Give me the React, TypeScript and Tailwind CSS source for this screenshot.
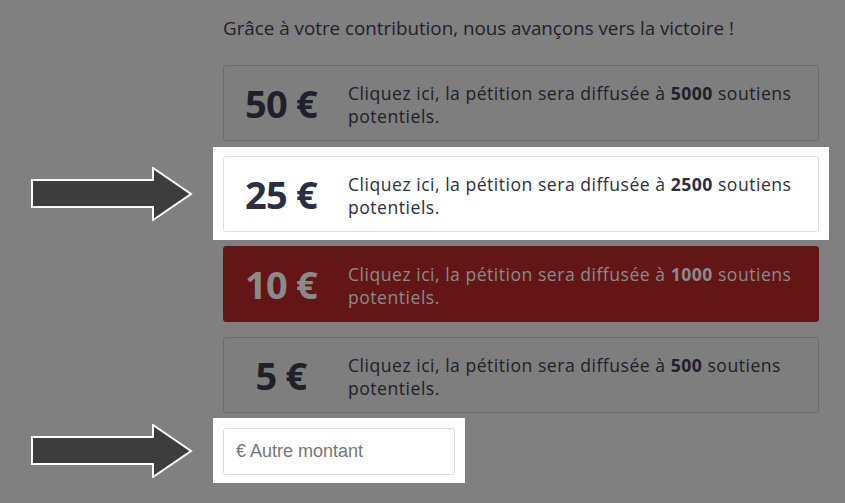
import React from "react";

type Tier = { amount: number; reach: number; tone: "dim" | "lit" | "red" };

const tiers: Tier[] = [
  { amount: 50, reach: 5000, tone: "dim" },
  { amount: 25, reach: 2500, tone: "lit" },
  { amount: 10, reach: 1000, tone: "red" },
  { amount: 5, reach: 500, tone: "dim" },
];

const Arrow = () => (
  <svg width="162" height="54" viewBox="0 0 162 54" className="block">
    <polygon
      points="1,13 122,13 122,1 160,27 122,53 122,40 1,40"
      fill="#3d3d3d"
      stroke="#ffffff"
      strokeWidth="2"
      strokeLinejoin="miter"
    />
  </svg>
);

const toneCard = {
  dim: "bg-[#7e7e7e] border-[#6c6c6c] text-[#1f2029]",
  lit: "bg-white border-[#dedede] text-[#2b2f3f]",
  red: "bg-[#641616] border-[#641616] text-[#8a8a8a]",
};

function TierCard({ tier }: { tier: Tier }) {
  return (
    <div
      className={`flex h-[76px] w-[596px] items-center rounded-[3px] border ${toneCard[tier.tone]}`}
    >
      <div className="w-[114px] shrink-0 text-center text-[38px] font-bold leading-none tracking-[-0.8px]">
        {tier.amount} €
      </div>
      <p className="ml-[10px] w-[455px] pt-[4px] text-[17.6px] leading-[23px] tracking-[0.5px]">
        Cliquez ici, la pétition sera diffusée à <b>{tier.reach}</b> soutiens potentiels.
      </p>
    </div>
  );
}

export default function App() {
  return (
    <div className="h-[503px] w-[845px] overflow-hidden bg-[#808080] font-['Open_Sans',sans-serif]">
      <div className="pl-[223px] pt-[16px] text-[18.8px] leading-[24px] text-[#1f2029]">
        Grâce à votre contribution, nous avançons vers la victoire !
      </div>

      {/* 50 € */}
      <div className="mt-[25px] flex">
        <div className="w-[223px] shrink-0" />
        <TierCard tier={tiers[0]} />
      </div>

      {/* 25 € highlighted */}
      <div className="mt-[6px] flex items-center">
        <div className="flex w-[213px] shrink-0 pl-[31px]">
          <Arrow />
        </div>
        <div className="bg-white px-[10px] pt-[9px] pb-[8px]">
          <TierCard tier={tiers[1]} />
        </div>
      </div>

      {/* 10 € */}
      <div className="mt-[6px] flex">
        <div className="w-[223px] shrink-0" />
        <TierCard tier={tiers[2]} />
      </div>

      {/* 5 € */}
      <div className="mt-[15px] flex">
        <div className="w-[223px] shrink-0" />
        <TierCard tier={tiers[3]} />
      </div>

      {/* autre montant */}
      <div className="mt-[5px] flex items-center">
        <div className="flex w-[213px] shrink-0 pl-[31px]">
          <Arrow />
        </div>
        <div className="bg-white px-[10px] pt-[10px] pb-[8px]">
          <input
            type="text"
            placeholder="€ Autre montant"
            className="block h-[47px] w-[232px] rounded-[3px] border border-[#dcdcdc] bg-white px-[12px] font-['Liberation_Sans',sans-serif] text-[18px] text-[#333] placeholder:text-[#767676] outline-none"
          />
        </div>
      </div>
    </div>
  );
}
